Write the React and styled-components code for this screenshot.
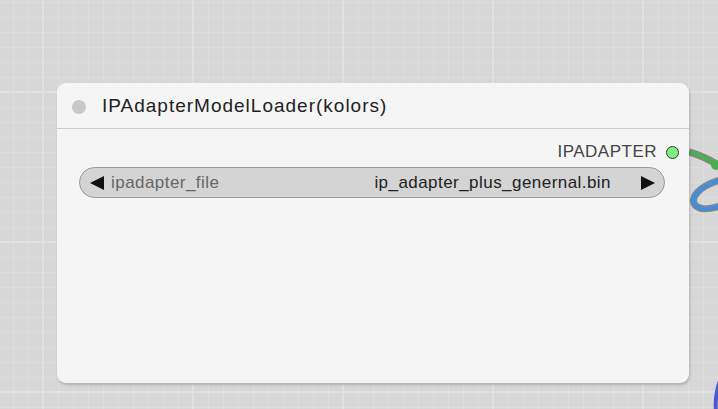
import React from "react"
import styled, { createGlobalStyle } from "styled-components"

const Global = createGlobalStyle`
  html, body {
    margin: 0;
    padding: 0;
    overflow: hidden;
  }
  body {
    font-family: "Liberation Sans", Arial, sans-serif;
  }
`

const App = () => {
    return (
        <Canvas>
            <Global />
            <Wires width="718" height="409" viewBox="0 0 718 409">
                <path d="M689 152 C 700 155, 710 160, 720 166" stroke="#222" strokeWidth="7" fill="none" opacity="0.45" />
                <path d="M689 152 C 700 155, 710 160, 720 166" stroke="#4caf50" strokeWidth="4" fill="none" />
                <circle cx="716" cy="165" r="5" fill="#4caf50" />
                <path d="M720 180 C 700 186, 688 198, 696 206 C 702 211, 714 208, 720 206" stroke="#222" strokeWidth="7" fill="none" opacity="0.45" />
                <path d="M720 180 C 700 186, 688 198, 696 206 C 702 211, 714 208, 720 206" stroke="#3d8fe0" strokeWidth="4" fill="none" />
                <path d="M721 378 C 716 390, 715 400, 716 412" stroke="#4a5ad0" strokeWidth="4" fill="none" />
            </Wires>
            <Node>
                <TitleBar>
                    <TitleDot />
                    <Title>IPAdapterModelLoader(kolors)</Title>
                </TitleBar>
                <Body>
                    <OutputRow>
                        <OutputLabel>IPADAPTER</OutputLabel>
                        <Slot color="#7ff07f" />
                    </OutputRow>
                    <Combo>
                        <Arrow width="16" height="16" viewBox="0 0 16 16">
                            <polygon points="15,1 15,15 1,8" fill="#111" />
                        </Arrow>
                        <ComboName>ipadapter_file</ComboName>
                        <ComboValue>ip_adapter_plus_genernal.bin</ComboValue>
                        <Arrow width="16" height="16" viewBox="0 0 16 16">
                            <polygon points="1,1 1,15 15,8" fill="#111" />
                        </Arrow>
                    </Combo>
                </Body>
            </Node>
        </Canvas>
    )
}
export default App


const Canvas = styled.div`
    position: relative;
    width: 718px;
    height: 409px;
    overflow: hidden;
    background-color: #d7d7d7;
    background-image:
        linear-gradient(to right, #e1e1e1 2px, transparent 2px),
        linear-gradient(to bottom, #e1e1e1 2px, transparent 2px),
        linear-gradient(to right, #dddddd 1px, transparent 1px),
        linear-gradient(to bottom, #dddddd 1px, transparent 1px);
    background-size: 150px 150px, 150px 150px, 15px 15px, 15px 15px;
    background-position: 42px 0, 0 91px, 13px 0, 0 2px;
`;

const Wires = styled.svg`
    position: absolute;
    left: 0;
    top: 0;
`;

const Node = styled.div`
    position: absolute;
    left: 57px;
    top: 83px;
    width: 632px;
    height: 300px;
    background: #f5f5f5;
    border-radius: 9px;
    box-shadow: 1px 2px 3px rgba(0, 0, 0, 0.18);
    display: flex;
    flex-direction: column;
`;

const TitleBar = styled.div`
    height: 46px;
    box-sizing: border-box;
    padding-top: 1px;
    border-bottom: 1px solid #cdcdcd;
    display: flex;
    align-items: center;
    padding-left: 15px;
    gap: 16px;
`;

const TitleDot = styled.div`
    width: 14px;
    height: 14px;
    border-radius: 50%;
    background: #c8c8c8;
    margin-top: 2px;
`;

const Title = styled.div`
    font-size: 19px;
    color: #222;
    letter-spacing: 1px;
`;

const Body = styled.div`
    display: flex;
    flex-direction: column;
    padding: 13px 10px 0 22px;
`;

const OutputRow = styled.div`
    display: flex;
    justify-content: flex-end;
    align-items: center;
    gap: 9px;
    height: 20px;
`;

const OutputLabel = styled.div`
    font-size: 17px;
    color: #444;
    letter-spacing: 0.5px;
`;

const Slot = styled.div`
    width: 11px;
    height: 11px;
    border-radius: 50%;
    background: ${(p) => p.color};
    border: 1px solid #333;
`;

const Combo = styled.div`
    margin-top: 5px;
    width: 586px;
    height: 31px;
    box-sizing: border-box;
    border: 1px solid #999;
    border-radius: 16px;
    background: #d4d4d4;
    display: flex;
    align-items: center;
    padding: 0 8px 0 9px;
    font-size: 17px;
    letter-spacing: 0.45px;
`;

const Arrow = styled.svg`
    flex: none;
`;

const ComboName = styled.div`
    color: #666;
    margin-left: 6px;
    flex: 1;
`;

const ComboValue = styled.div`
    color: #222;
    margin-right: 29px;
`;
